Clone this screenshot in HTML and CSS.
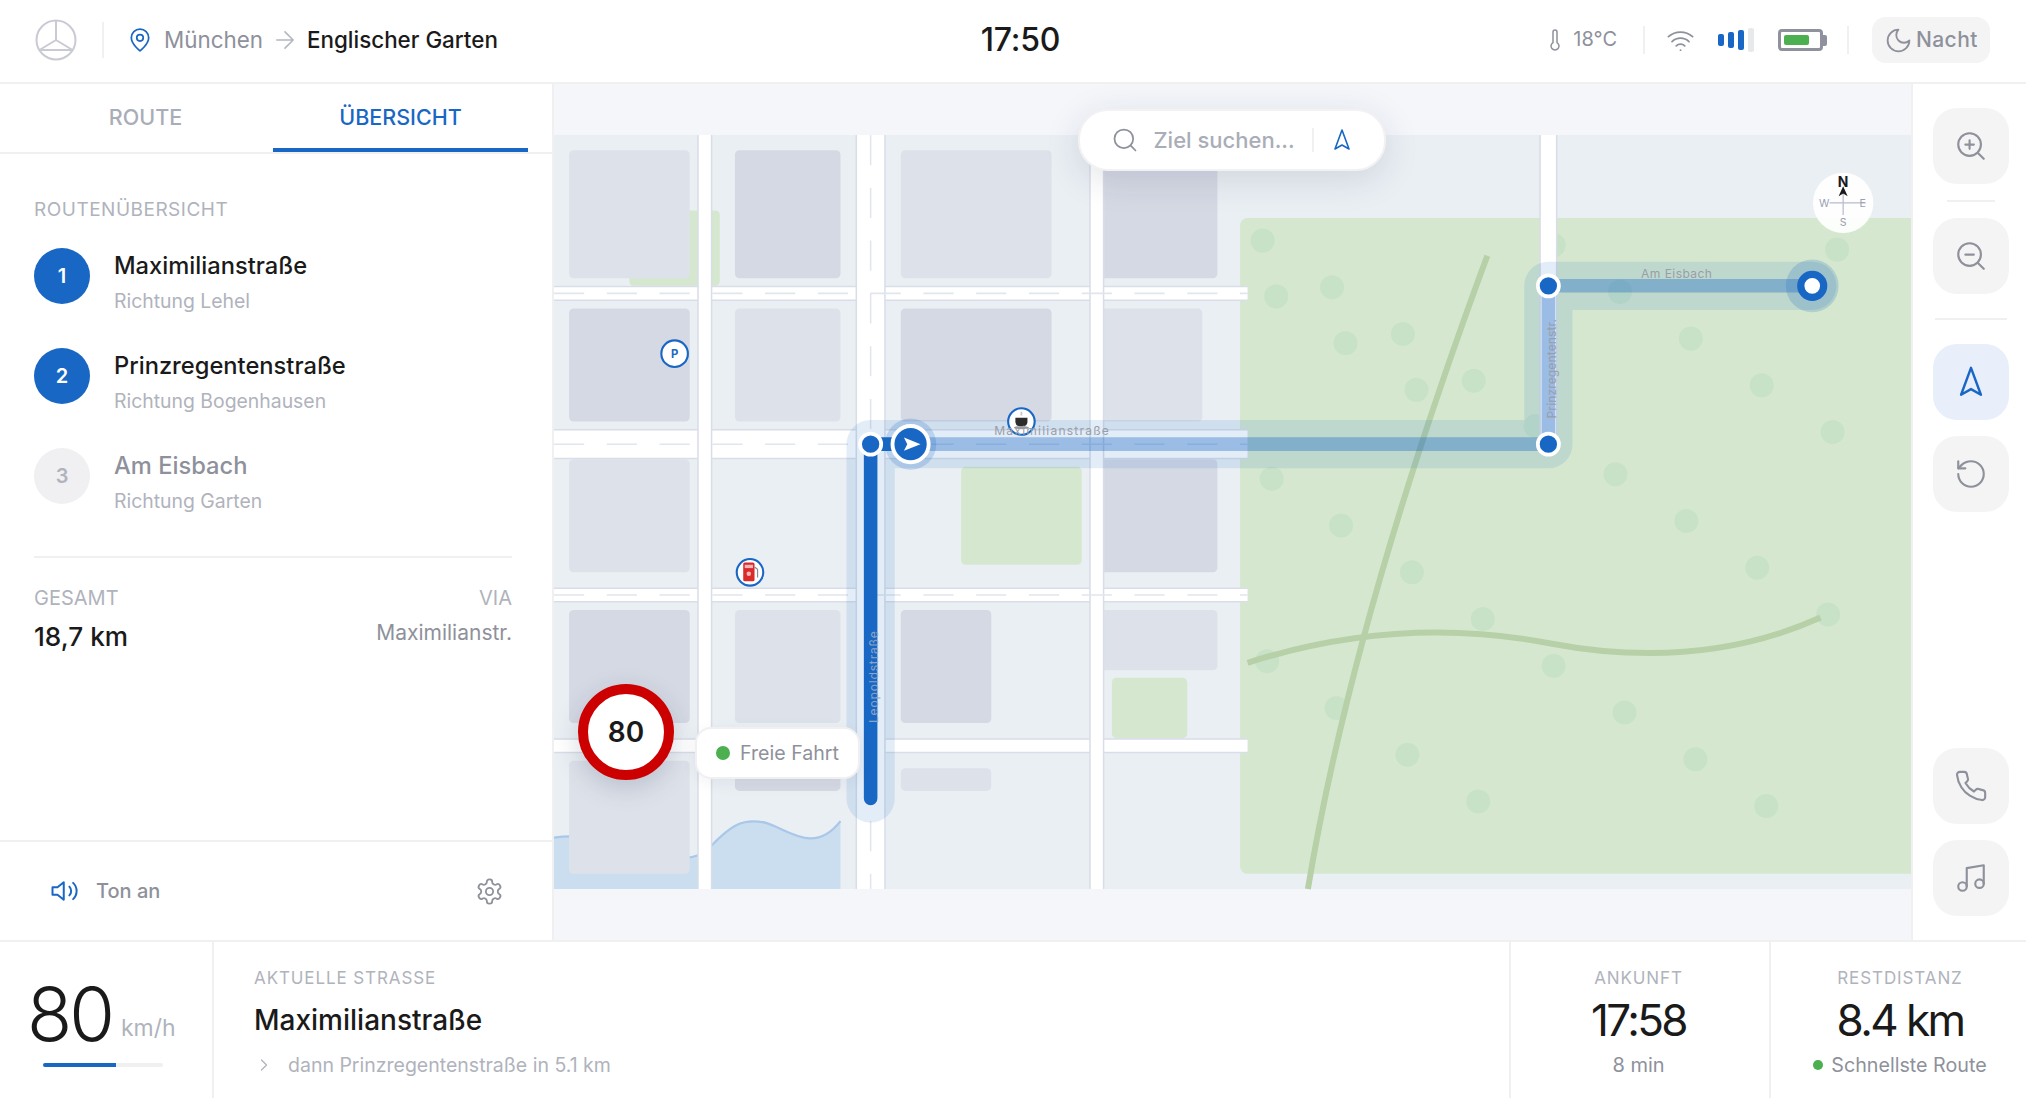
FILE: index.html
```html
<!DOCTYPE html>
<html lang="de">
<head>
<meta charset="utf-8">
<title>Navigation</title>
<link rel="stylesheet" href="styles.css">
</head>
<body>
<div class="app">
  <header class="topbar">
    <div class="top-left">
      <svg class="logo" viewBox="0 0 42 42"><circle cx="21" cy="21" r="19.5"/><path d="M21 2 L21 21 M21 21 L4.5 31 M21 21 L37.5 31 M5 31 H37"/></svg>
      <span class="vline"></span>
      <svg class="ic ic-pin" viewBox="0 0 24 24"><path d="M20 10c0 6-8 12-8 12s-8-6-8-12a8 8 0 0 1 16 0Z"/><circle cx="12" cy="10" r="3"/></svg>
      <span class="crumb-from">München</span>
      <svg class="ic ic-arrow" viewBox="0 0 24 24"><path d="M5 12h14M12 5l7 7-7 7"/></svg>
      <span class="crumb-to">Englischer Garten</span>
    </div>
    <div class="clock">17:50</div>
    <div class="top-right">
      <svg class="ic ic-thermo" viewBox="0 0 24 24"><path d="M14 4v10.54a4 4 0 1 1-4 0V4a2 2 0 0 1 4 0Z"/></svg>
      <span class="temp">18°C</span>
      <span class="vline vline-s"></span>
      <svg class="ic ic-wifi" viewBox="0 0 24 24"><path d="M2 8.82a15 15 0 0 1 20 0M5 12.86a10 10 0 0 1 14 0M8.5 16.43a5 5 0 0 1 7 0M12 20h.01"/></svg>
      <div class="signal"><i class="b1"></i><i class="b2"></i><i class="b3"></i><i class="b4"></i></div>
      <div class="battery"><div class="batt-body"><i class="batt-fill"></i></div><i class="batt-cap"></i></div>
      <span class="vline vline-s vline-end"></span>
      <div class="night">
        <svg class="ic ic-moon" viewBox="0 0 24 24"><path d="M12 3a6 6 0 0 0 9 9 9 9 0 1 1-9-9Z"/></svg>
        <span class="night-text">Nacht</span>
      </div>
    </div>
  </header>

  <main class="middle">
    <aside class="sidebar">
      <nav class="tabs">
        <div class="tab">ROUTE</div>
        <div class="tab tab-active">ÜBERSICHT</div>
      </nav>
      <section class="overview">
        <div class="section-label">ROUTENÜBERSICHT</div>
        <div class="steps">
          <div class="step">
            <div class="step-num">1</div>
            <div class="step-text"><div class="step-name">Maximilianstraße</div><div class="step-sub">Richtung Lehel</div></div>
          </div>
          <div class="step">
            <div class="step-num">2</div>
            <div class="step-text"><div class="step-name">Prinzregentenstraße</div><div class="step-sub">Richtung Bogenhausen</div></div>
          </div>
          <div class="step step-off">
            <div class="step-num">3</div>
            <div class="step-text"><div class="step-name">Am Eisbach</div><div class="step-sub">Richtung Garten</div></div>
          </div>
        </div>
        <div class="totals">
          <div class="tot-col">
            <div class="tot-label">GESAMT</div>
            <div class="tot-value">18,7 km</div>
          </div>
          <div class="tot-col tot-right">
            <div class="tot-label">VIA</div>
            <div class="tot-via">Maximilianstr.</div>
          </div>
        </div>
      </section>
      <footer class="side-foot">
        <div class="sound">
          <svg class="ic ic-speaker" viewBox="0 0 24 24"><path d="M11 5 6 9H2v6h4l5 4V5Z"/><path d="M15.5 8.5a5 5 0 0 1 0 7M18.5 5.5a9 9 0 0 1 0 13"/></svg>
          <span>Ton an</span>
        </div>
        <svg class="ic ic-gear" viewBox="0 0 24 24"><path d="M12.22 2h-.44a2 2 0 0 0-2 2v.18a2 2 0 0 1-1 1.73l-.43.25a2 2 0 0 1-2 0l-.15-.08a2 2 0 0 0-2.73.73l-.22.38a2 2 0 0 0 .73 2.73l.15.1a2 2 0 0 1 1 1.72v.51a2 2 0 0 1-1 1.74l-.15.09a2 2 0 0 0-.73 2.73l.22.38a2 2 0 0 0 2.73.73l.15-.08a2 2 0 0 1 2 0l.43.25a2 2 0 0 1 1 1.73V20a2 2 0 0 0 2 2h.44a2 2 0 0 0 2-2v-.18a2 2 0 0 1 1-1.73l.43-.25a2 2 0 0 1 2 0l.15.08a2 2 0 0 0 2.73-.73l.22-.39a2 2 0 0 0-.73-2.73l-.15-.08a2 2 0 0 1-1-1.74v-.5a2 2 0 0 1 1-1.74l.15-.09a2 2 0 0 0 .73-2.73l-.22-.38a2 2 0 0 0-2.73-.73l-.15.08a2 2 0 0 1-2 0l-.43-.25a2 2 0 0 1-1-1.73V4a2 2 0 0 0-2-2Z"/><circle cx="12" cy="12" r="3"/></svg>
      </footer>
    </aside>

    <div class="map">
      <svg class="map-svg" viewBox="0 0 900 500" preserveAspectRatio="xMidYMid meet">
        <rect class="m-ground" x="0" y="0" width="900" height="500"/>
        <rect class="m-park" x="455" y="55" width="450" height="435" rx="5"/>
        <rect class="m-park" x="50" y="50" width="60" height="50" rx="3"/>
        <rect class="m-park" x="270" y="220" width="80" height="65" rx="3"/>
        <rect class="m-park" x="370" y="360" width="50" height="40" rx="3"/>
        <path class="m-water" d="M0 466 C40 460 70 490 100 476 C118 456 126 453 140 456 C155 460 172 478 190 455 L190 500 L0 500Z"/>
        <path class="m-shore" d="M0 466 C40 460 70 490 100 476 C118 456 126 453 140 456 C155 460 172 478 190 455"/>

        <g class="m-trees">
          <circle cx="470" cy="70" r="8"/><circle cx="479" cy="107" r="8"/><circle cx="516" cy="101" r="8"/>
          <circle cx="525" cy="138" r="8"/><circle cx="563" cy="132" r="8"/><circle cx="572" cy="169" r="8"/>
          <circle cx="610" cy="163" r="8"/><circle cx="754" cy="135" r="8"/><circle cx="801" cy="166" r="8"/>
          <circle cx="851" cy="76" r="8"/><circle cx="848" cy="197" r="8"/><circle cx="704" cy="225" r="8"/>
          <circle cx="751" cy="256" r="8"/><circle cx="476" cy="228" r="8"/><circle cx="522" cy="259" r="8"/>
          <circle cx="707" cy="104" r="8"/><circle cx="663" cy="73" r="8"/><circle cx="651" cy="193" r="8"/>
          <circle cx="569" cy="290" r="8"/><circle cx="798" cy="287" r="8"/><circle cx="616" cy="321" r="8"/>
          <circle cx="845" cy="318" r="8"/><circle cx="473" cy="349" r="8"/><circle cx="663" cy="352" r="8"/>
          <circle cx="519" cy="380" r="8"/><circle cx="710" cy="383" r="8"/><circle cx="566" cy="411" r="8"/>
          <circle cx="757" cy="414" r="8"/><circle cx="613" cy="442" r="8"/><circle cx="804" cy="445" r="8"/>
        </g>
        <path class="m-path" d="M619 80 Q530 320 500 500"/>
        <path class="m-path" d="M460 350 Q560 318 660 337 T840 320"/>

        <g class="m-blocks-a">
          <rect x="10" y="10" width="80" height="85" rx="3"/><rect x="230" y="10" width="100" height="85" rx="3"/>
          <rect x="120" y="115" width="70" height="75" rx="3"/><rect x="360" y="115" width="70" height="75" rx="3"/>
          <rect x="10" y="215" width="80" height="75" rx="3"/>
          <rect x="120" y="315" width="70" height="75" rx="3"/><rect x="360" y="315" width="80" height="40" rx="3"/>
          <rect x="10" y="415" width="80" height="75" rx="3"/><rect x="230" y="420" width="60" height="15" rx="3"/>
        </g>
        <g class="m-blocks-b">
          <rect x="120" y="10" width="70" height="85" rx="3"/><rect x="360" y="10" width="80" height="85" rx="3"/>
          <rect x="10" y="115" width="80" height="75" rx="3"/><rect x="230" y="115" width="100" height="75" rx="3"/>
          <rect x="360" y="215" width="80" height="75" rx="3"/>
          <rect x="10" y="315" width="80" height="75" rx="3"/><rect x="230" y="315" width="60" height="75" rx="3"/>
          <rect x="120" y="415" width="70" height="20" rx="3"/>
        </g>

        <g class="m-casing">
          <path class="w10" d="M0 105H460M0 305H460M0 405H460"/>
          <path class="w20" d="M0 205H460"/>
        </g>
        <g class="m-road">
          <path class="w8" d="M0 105H460M0 305H460M0 405H460"/>
          <path class="w18" d="M0 205H460"/>
        </g>
        <g class="m-casing">
          <path class="w10" d="M100 0V500M360 0V500"/>
          <path class="w20" d="M210 0V500"/>
          <path class="w12" d="M659.5 0V205"/>
        </g>
        <g class="m-road">
          <path class="w8" d="M100 0V500M360 0V500"/>
          <path class="w18" d="M210 0V500"/>
          <path class="w10" d="M659.5 0V205"/>
        </g>
        <g class="m-dash">
          <path d="M0 105H460M0 205H460M0 305H460M210 0V500"/>
        </g>

        <path class="m-halo" d="M210 440V205H659.5V100H834.5"/>
        <path class="m-route-soft" d="M236.5 205H659.5V100H834.5"/>
        <path class="m-route-solid" d="M210 440V205H236.5"/>

        <circle class="m-halo-dot" cx="834.5" cy="100" r="17.5"/>
        <circle class="m-dest" cx="834.5" cy="100" r="7.6"/>
        <circle class="m-way" cx="210" cy="205" r="7"/>
        <circle class="m-way" cx="659.5" cy="205" r="7"/>
        <circle class="m-way" cx="659.5" cy="100" r="7"/>

        <g class="m-poi">
          <circle cx="80" cy="145" r="8.8"/>
          <text class="m-poi-p" x="80" y="148" text-anchor="middle">P</text>
        </g>
        <g class="m-poi">
          <circle cx="130" cy="290" r="8.8"/>
          <rect class="m-fuel" x="125.5" y="283.5" width="7.5" height="12.5" rx="1"/>
          <rect class="m-fuel-light" x="126.5" y="285" width="5.5" height="2.2"/>
          <circle class="m-fuel-light" cx="129.2" cy="291" r="1.5"/>
          <path class="m-fuel-hose" d="M133 286.5 L135 288 V293.5"/>
        </g>
        <g class="m-poi">
          <circle cx="310" cy="190" r="8.8"/>
          <path class="m-cup" d="M306 187.5H314V190.5a3 3 0 0 1-3 2.6H309a3 3 0 0 1-3-2.6Z"/>
          <ellipse class="m-saucer" cx="310" cy="194" rx="5" ry="1.1"/>
          <path class="m-steam" d="M310 186V183.5"/>
        </g>

        <text class="m-label" x="292" y="199" textLength="76">Maximilianstraße</text>
        <text class="m-label" x="721" y="95" textLength="47">Am Eisbach</text>
        <text class="m-label" transform="rotate(-90 664.5 188)" x="664.5" y="188" textLength="66">Prinzregentenstr.</text>
        <text class="m-label m-label-lp" transform="rotate(-90 215 390)" x="215" y="390" textLength="61">Leopoldstraße</text>

        <circle class="m-nav-halo" cx="236.5" cy="205" r="17"/>
        <circle class="m-nav" cx="236.5" cy="205" r="12"/>
        <path class="m-nav-arrow" d="M232.1 200.6 L243.1 205 L232.1 209.4 L234.3 205Z"/>

        <g class="m-compass">
          <circle class="m-c-bg" cx="855" cy="45" r="20"/>
          <path class="m-c-line" d="M846 45H870M855 38V53"/>
          <text class="m-c-n" x="855" y="34.5" text-anchor="middle">N</text>
          <path class="m-c-needle" d="M855 34L852 40.6L855 38.8L858 40.6Z"/>
          <text class="m-c-t" x="842.5" y="47.6" text-anchor="middle">W</text>
          <text class="m-c-t" x="868" y="47.6" text-anchor="middle">E</text>
          <text class="m-c-t" x="855" y="60.2" text-anchor="middle">S</text>
        </g>
      </svg>

      <div class="search">
        <svg class="ic ic-search" viewBox="0 0 24 24"><circle cx="11" cy="11" r="8"/><path d="m21 21-4.3-4.3"/></svg>
        <span class="search-text">Ziel suchen...</span>
        <span class="search-div"></span>
        <svg class="ic ic-locate" viewBox="0 0 24 24"><polygon points="12 2 19 21 12 17 5 21 12 2"/></svg>
      </div>

      <div class="limit">80</div>
      <div class="free"><i class="dot dot-free"></i><span>Freie Fahrt</span></div>
    </div>

    <aside class="rail">
      <div class="rbtn"><svg class="ic ic-r" viewBox="0 0 24 24"><circle cx="11" cy="11" r="8"/><path d="m21 21-4.3-4.3M11 8v6M8 11h6"/></svg></div>
      <div class="rule"></div>
      <div class="rbtn"><svg class="ic ic-r" viewBox="0 0 24 24"><circle cx="11" cy="11" r="8"/><path d="m21 21-4.3-4.3M8 11h6"/></svg></div>
      <div class="rule rule-wide"></div>
      <div class="rbtn rbtn-on"><svg class="ic ic-r" viewBox="0 0 24 24"><polygon points="12 2 19 21 12 17 5 21 12 2"/></svg></div>
      <div class="rbtn"><svg class="ic ic-r" viewBox="0 0 24 24"><path d="M3 12a9 9 0 1 0 9-9 9.75 9.75 0 0 0-6.74 2.74L3 8"/><path d="M3 3v5h5"/></svg></div>
      <div class="rbtn rbtn-push"><svg class="ic ic-r" viewBox="0 0 24 24"><path d="M22 16.92v3a2 2 0 0 1-2.18 2 19.79 19.79 0 0 1-8.63-3.07 19.5 19.5 0 0 1-6-6 19.79 19.79 0 0 1-3.07-8.67A2 2 0 0 1 4.11 2h3a2 2 0 0 1 2 1.72c.13.96.36 1.9.7 2.81a2 2 0 0 1-.45 2.11L8.09 9.91a16 16 0 0 0 6 6l1.27-1.27a2 2 0 0 1 2.11-.45c.91.34 1.85.57 2.81.7A2 2 0 0 1 22 16.92Z"/></svg></div>
      <div class="rbtn"><svg class="ic ic-r" viewBox="0 0 24 24"><path d="M9 18V5l12-2v13"/><circle cx="6" cy="18" r="3"/><circle cx="18" cy="16" r="3"/></svg></div>
    </aside>
  </main>

  <footer class="bottom">
    <div class="b-speed">
      <div class="speed-row"><span class="speed-num">80</span><span class="speed-unit">km/h</span></div>
      <div class="speed-bar"><i class="speed-fill"></i></div>
    </div>
    <div class="b-street">
      <div class="b-label">AKTUELLE STRASSE</div>
      <div class="street-name">Maximilianstraße</div>
      <div class="street-next">
        <svg class="ic ic-chev" viewBox="0 0 24 24"><path d="m9 18 6-6-6-6"/></svg>
        <span>dann Prinzregentenstraße in 5.1 km</span>
      </div>
    </div>
    <div class="b-stat b-arrive">
      <div class="b-label">ANKUNFT</div>
      <div class="stat-num">17:58</div>
      <div class="stat-sub">8 min</div>
    </div>
    <div class="b-stat b-rest">
      <div class="b-label">RESTDISTANZ</div>
      <div class="stat-num">8.4 km</div>
      <div class="stat-sub"><i class="dot dot-route"></i>Schnellste Route</div>
    </div>
  </footer>
</div>
</body>
</html>
```
FILE: styles.css
```css
* { box-sizing: border-box; }
html, body { margin: 0; height: 100%; }
body { font-family: Inter, "Liberation Sans", sans-serif; color: #1a1a1a; background: #fff; overflow: hidden; }
i { display: block; }
.app { width: 2026px; height: 1098px; display: flex; flex-direction: column; }
.ic { display: block; fill: none; stroke: #8e919b; stroke-width: 1.5; stroke-linecap: round; stroke-linejoin: round; flex: none; }

/* top bar */
.topbar { height: 84px; flex: none; border-bottom: 2px solid #f0f0f0; display: grid; grid-template-columns: 1fr auto 1fr; align-items: center; padding: 0 36px 2px 35px; }
.top-left { display: flex; align-items: center; }
.logo { width: 42px; height: 42px; fill: none; stroke: #c8cbd2; stroke-width: 2; flex: none; }
.vline { width: 2px; height: 36px; background: #f0f0f0; margin: 0 23px 0 25px; flex: none; }
.ic-pin { width: 26px; height: 26px; stroke: #1967c4; stroke-width: 1.6; margin-right: 11px; }
.crumb-from { font-size: 22.4px; color: #8e919b; padding-bottom: 2px; }
.ic-arrow { width: 28px; height: 28px; stroke: #b4b7c0; stroke-width: 1.4; margin: 0 8px; }
.crumb-to { font-size: 22.4px; font-weight: 500; color: #1a1a1a; padding-bottom: 2px; }
.clock { font-size: 32px; font-weight: 500; margin-left: 16px; letter-spacing: -.2px; padding-bottom: 2px; }
.top-right { display: flex; align-items: center; justify-content: flex-end; }
.ic-thermo { width: 24px; height: 24px; margin-right: 6px; }
.temp { font-size: 20px; color: #8e919b; padding-bottom: 2px; }
.vline-s { height: 28px; margin: 0 21px 0 26px; }
.vline-end { margin: 0 23px 0 20px; }
.ic-wifi { width: 29px; height: 29px; margin-right: 23px; }
.signal { display: flex; align-items: center; gap: 4px; margin-right: 24px; }
.signal i { width: 6px; border-radius: 2px; background: #1967c4; }
.b1 { height: 12px; } .b2 { height: 16px; } .b3 { height: 20px; }
.signal .b4 { height: 24px; background: #e8e9eb; }
.battery { display: flex; align-items: center; }
.batt-body { width: 45px; height: 22px; border: 3px solid #8f929c; border-radius: 4px; padding: 3px; }
.batt-fill { width: 25px; height: 10px; background: #4caf50; border-radius: 2px; }
.batt-cap { width: 4px; height: 11px; background: #8f929c; border-radius: 0 2px 2px 0; }
.night { width: 118px; height: 46px; background: #f4f4f5; border-radius: 14px; display: flex; align-items: center; padding-left: 12px; gap: 3px; font-size: 21px; font-weight: 500; color: #8e919b; }
.night-text { letter-spacing: .4px; padding-bottom: 1px; }
.ic-moon { width: 29px; height: 29px; }

/* middle */
.middle { flex: 1; display: flex; min-height: 0; }
.sidebar { width: 554px; flex: none; border-right: 2px solid #f0f0f0; display: flex; flex-direction: column; }
.tabs { height: 70px; flex: none; border-bottom: 2px solid #f0f0f0; display: flex; padding: 0 24px 0 18px; }
.tab { width: 255px; height: 68px; display: flex; align-items: center; justify-content: center; font-size: 21.5px; font-weight: 500; color: #a9adb7; border-bottom: 4px solid transparent; padding-top: 2px; }
.tab-active { color: #1967c4; border-bottom-color: #1967c4; }
.overview { flex: 1; padding: 45px 40px 0 34px; }
.section-label { font-size: 19px; line-height: 22px; color: #b0b3bc; letter-spacing: .5px; }
.steps { display: flex; flex-direction: column; gap: 44px; margin-top: 27px; }
.step { display: flex; gap: 24px; height: 56px; }
.step-num { width: 56px; height: 56px; border-radius: 50%; background: #1967c4; color: #fff; font-size: 20px; font-weight: 600; display: flex; align-items: center; justify-content: center; flex: none; }
.step-text { margin-top: 3px; }
.step-name { font-size: 23.7px; line-height: 30px; font-weight: 500; }
.step-sub { font-size: 19.4px; line-height: 26px; color: #b0b3bc; margin-top: 7px; }
.step-off .step-num { background: #f0f0f2; color: #b0b3bc; }
.step-off .step-name { color: #8e919b; }
.totals { border-top: 2px solid #f0f0f0; margin-top: 52px; padding-top: 28px; display: flex; justify-content: space-between; }
.tot-label { font-size: 20px; line-height: 24px; color: #b0b3bc; }
.tot-value { font-size: 26.2px; line-height: 36px; font-weight: 500; margin-top: 9px; }
.tot-right { text-align: right; }
.tot-via { font-size: 21px; line-height: 28px; color: #8e919b; margin-top: 9px; }
.side-foot { height: 100px; flex: none; border-top: 2px solid #f0f0f0; display: flex; align-items: center; justify-content: space-between; padding: 0 48px 0 50px; }
.sound { display: flex; align-items: center; gap: 16px; font-size: 20px; font-weight: 500; color: #8e919b; }
.ic-speaker { width: 30px; height: 30px; stroke: #1967c4; stroke-width: 1.6; }
.ic-gear { width: 29px; height: 29px; }

/* map */
.map { flex: 1; position: relative; background: #f4f6fa; min-width: 0; }
.map-svg { display: block; width: 100%; height: 100%; font-family: Inter, "Liberation Sans", sans-serif; }
.m-ground { fill: #eaeff4; }
.m-park { fill: #d5e8cf; }
.m-water { fill: #cadef0; }
.m-shore { fill: none; stroke: #a9c7e8; stroke-width: 1.5; }
.m-trees { fill: #c8e2c8; }
.m-path { fill: none; stroke: #b8d0a8; stroke-width: 4; }
.m-blocks-a { fill: #dde2ea; }
.m-blocks-b { fill: #d5d9e4; }
.m-casing, .m-road, .m-dash { fill: none; }
.m-casing { stroke: #d9dde7; }
.m-road { stroke: #fff; }
.w8 { stroke-width: 8; } .w10 { stroke-width: 10; } .w12 { stroke-width: 12; } .w18 { stroke-width: 18; } .w20 { stroke-width: 20; }
.m-dash { stroke: #e1e5ed; stroke-width: 1; stroke-dasharray: 20 15; }
.m-halo { fill: none; stroke: rgba(25,103,196,.12); stroke-width: 32; stroke-linecap: round; stroke-linejoin: round; }
.m-route-soft { fill: none; stroke: rgba(25,103,196,.36); stroke-width: 9; }
.m-route-solid { fill: none; stroke: #1967c4; stroke-width: 9; stroke-linecap: round; }
.m-halo-dot { fill: rgba(25,103,196,.2); }
.m-dest { fill: #fff; stroke: #1967c4; stroke-width: 4.8; }
.m-way { fill: #1967c4; stroke: #fff; stroke-width: 2.5; }
.m-poi circle { fill: #fff; stroke: #1967c4; stroke-width: 1.4; }
.m-poi-p { fill: #1967c4; font-size: 7.5px; font-weight: 700; }
.m-poi .m-fuel { fill: #d92b2b; }
.m-poi .m-fuel-light { fill: #f3b6b6; stroke: none; }
.m-fuel-hose { fill: none; stroke: #8a8a90; stroke-width: .8; }
.m-cup { fill: #2c2c2c; }
.m-saucer { fill: #9a9a9a; }
.m-steam { fill: none; stroke: #c8c8c8; stroke-width: 1.2; }
.m-label { font-size: 8px; fill: #9a9ea8; }
.m-label-lp { fill: #8ea4c4; }
.m-nav-halo { fill: rgba(25,103,196,.2); }
.m-nav { fill: #1967c4; stroke: #fff; stroke-width: 2.6; }
.m-nav-arrow { fill: #fff; }
.m-c-bg { fill: rgba(255,255,255,.92); }
.m-c-line { fill: none; stroke: #b8bccc; stroke-width: .8; }
.m-c-n { font-size: 9.2px; font-weight: 700; fill: #1a1a1a; }
.m-c-needle { fill: #1a1a1a; }
.m-c-t { font-size: 7px; fill: #9a9fb0; }

.search { position: absolute; top: 25px; left: 50%; transform: translateX(-50%); margin-left: -1px; width: 308px; height: 62px; background: #fff; border: 2px solid #f2f2f4; border-radius: 30px; box-shadow: 0 8px 36px rgba(30,40,70,.13); display: flex; align-items: center; padding-left: 31px; }
.ic-search { width: 28px; height: 28px; margin-right: 15px; }
.search-text { font-size: 22px; color: #a9adb7; font-weight: 500; white-space: nowrap; width: 158px; }
.search-div { width: 2px; height: 24px; background: #f0f0f0; flex: none; }
.ic-locate { width: 24px; height: 24px; stroke: #1967c4; stroke-width: 1.6; margin-left: 16px; }
.limit { position: absolute; left: 24px; bottom: 160px; width: 96px; height: 96px; border-radius: 50%; background: #fff; border: 10px solid #cc0000; display: flex; align-items: center; justify-content: center; font-size: 28px; font-weight: 600; box-shadow: 0 8px 26px rgba(30,40,70,.18); }
.free { position: absolute; left: 141px; bottom: 161px; width: 165px; height: 52px; background: #fff; border: 2px solid #f0f0f2; border-radius: 16px; display: flex; align-items: center; gap: 10px; padding-left: 19px; font-size: 19.6px; color: #8e919b; box-shadow: 0 4px 16px rgba(30,40,70,.06); white-space: nowrap; }
.dot { border-radius: 50%; background: #4caf50; flex: none; }
.dot-free { width: 14px; height: 14px; }

/* right rail */
.rail { width: 115px; flex: none; border-left: 2px solid #f0f0f0; display: flex; flex-direction: column; align-items: center; gap: 16px; padding: 24px 0 24px 3px; }
.rbtn { width: 76px; height: 76px; flex: none; background: #f4f4f5; border-radius: 24px; display: flex; align-items: center; justify-content: center; }
.rbtn-on { background: #e8eefa; }
.rbtn-on .ic { stroke: #1967c4; stroke-width: 1.7; }
.rbtn-push { margin-top: auto; }
.ic-r { width: 34px; height: 34px; }
.rule { width: 48px; height: 2px; background: #f0f0f0; flex: none; }
.rule-wide { width: 72px; margin: 8px 0; }

/* bottom bar */
.bottom { height: 158px; flex: none; border-top: 2px solid #f0f0f0; display: flex; }
.b-speed { width: 214px; flex: none; border-right: 2px solid #f0f0f0; padding: 25px 0 0 27px; }
.speed-row { display: flex; align-items: flex-end; gap: 9px; height: 94px; }
.speed-num { font-size: 74px; line-height: 94px; font-weight: 300; letter-spacing: -3px; }
.speed-unit { font-size: 23px; line-height: 26px; color: #b0b3bc; margin-bottom: 20px; }
.speed-bar { width: 120px; height: 4px; border-radius: 2px; background: #f0f0f0; margin: 2px 0 0 16px; overflow: hidden; }
.speed-fill { width: 61%; height: 100%; background: #1967c4; }
.b-street { flex: 1; padding: 25px 0 0 40px; min-width: 0; }
.b-label { font-size: 17px; line-height: 22px; color: #b0b3bc; letter-spacing: .9px; }
.street-name { font-size: 28px; line-height: 36px; font-weight: 500; margin-top: 13px; }
.street-next { display: flex; align-items: center; gap: 14px; font-size: 19.5px; line-height: 26px; color: #b0b3bc; margin-top: 14px; }
.ic-chev { width: 20px; height: 20px; stroke: #b0b3bc; }
.b-stat { flex: none; border-left: 2px solid #f0f0f0; display: flex; flex-direction: column; align-items: center; padding-top: 25px; }
.b-arrive { width: 260px; padding-right: 3px; }
.b-rest { width: 257px; padding-left: 3px; }
.stat-num { font-size: 44px; line-height: 50px; font-weight: 400; margin-top: 6px; letter-spacing: -2.6px; }
.stat-sub { font-size: 20px; line-height: 26px; color: #8e919b; display: flex; align-items: center; gap: 8px; margin-top: 7px; white-space: nowrap; }
.b-rest .stat-sub { font-size: 19.7px; }
.dot-route { width: 10px; height: 10px; }
```
